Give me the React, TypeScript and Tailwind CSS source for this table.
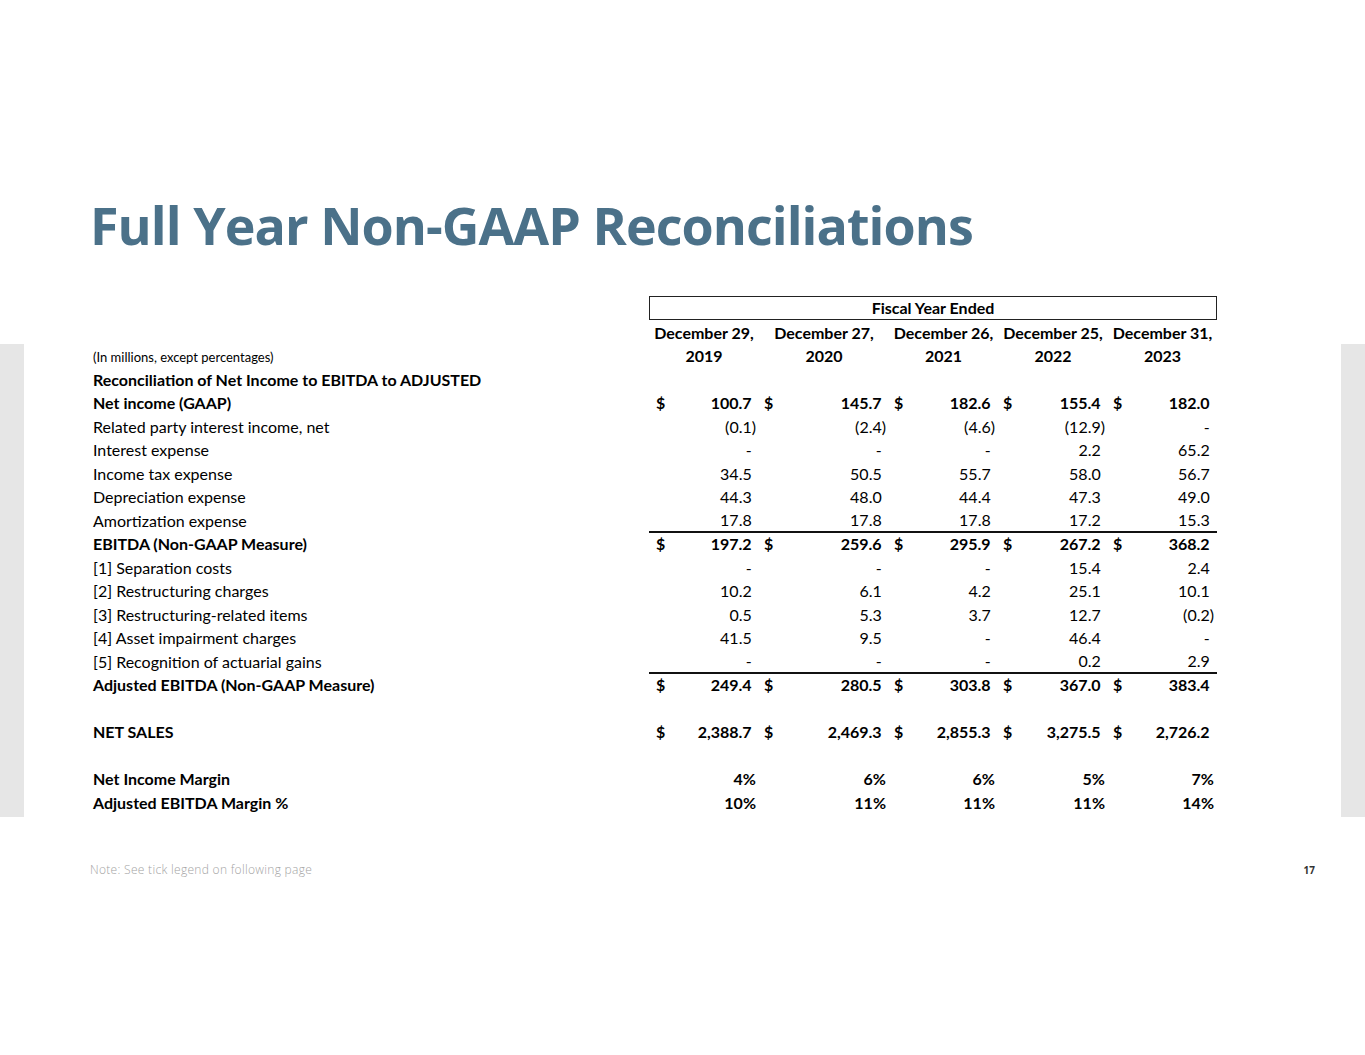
import React from 'react';

type Row = {
  label: string;
  bold?: boolean;
  values?: string[];
  dollar?: boolean;
  lineBelow?: boolean;
};

const ROWS: Row[] = [
  { label: 'Reconciliation of Net Income to EBITDA to ADJUSTED', bold: true },
  { label: 'Net income (GAAP)', bold: true, dollar: true, values: ['100.7', '145.7', '182.6', '155.4', '182.0'] },
  { label: 'Related party interest income, net', values: ['(0.1)', '(2.4)', '(4.6)', '(12.9)', '-'] },
  { label: 'Interest expense', values: ['-', '-', '-', '2.2', '65.2'] },
  { label: 'Income tax expense', values: ['34.5', '50.5', '55.7', '58.0', '56.7'] },
  { label: 'Depreciation expense', values: ['44.3', '48.0', '44.4', '47.3', '49.0'] },
  { label: 'Amortization expense', values: ['17.8', '17.8', '17.8', '17.2', '15.3'], lineBelow: true },
  { label: 'EBITDA (Non-GAAP Measure)', bold: true, dollar: true, values: ['197.2', '259.6', '295.9', '267.2', '368.2'] },
  { label: '[1] Separation costs', values: ['-', '-', '-', '15.4', '2.4'] },
  { label: '[2] Restructuring charges', values: ['10.2', '6.1', '4.2', '25.1', '10.1'] },
  { label: '[3] Restructuring-related items', values: ['0.5', '5.3', '3.7', '12.7', '(0.2)'] },
  { label: '[4] Asset impairment charges', values: ['41.5', '9.5', '-', '46.4', '-'] },
  { label: '[5] Recognition of actuarial gains', values: ['-', '-', '-', '0.2', '2.9'], lineBelow: true },
  { label: 'Adjusted EBITDA (Non-GAAP Measure)', bold: true, dollar: true, values: ['249.4', '280.5', '303.8', '367.0', '383.4'] },
  { label: '' },
  { label: 'NET SALES', bold: true, dollar: true, values: ['2,388.7', '2,469.3', '2,855.3', '3,275.5', '2,726.2'] },
  { label: '' },
  { label: 'Net Income Margin', bold: true, values: ['4%', '6%', '6%', '5%', '7%'] },
  { label: 'Adjusted EBITDA Margin %', bold: true, values: ['10%', '11%', '11%', '11%', '14%'] },
];

const DATES = [
  ['December 29,', '2019'],
  ['December 27,', '2020'],
  ['December 26,', '2021'],
  ['December 25,', '2022'],
  ['December 31,', '2023'],
];

const GRID = 'grid grid-cols-[556px_110px_130px_109px_110px_109px]';

function Value({ v }: { v: string }) {
  const pad = !v.startsWith('(') && !v.endsWith('%');
  return (
    <span>
      {v}
      {pad && <span className="invisible">)</span>}
    </span>
  );
}

export default function App() {
  return (
    <div className="w-[1365px] h-[1055px] bg-white overflow-hidden font-['Lato',sans-serif] text-black">
      <h1 className="pl-[90px] pt-[199px] text-[52px] leading-none font-bold tracking-[-0.95px] text-[#4b7189] font-['Open_Sans',sans-serif]">
        Full Year Non-GAAP Reconciliations
      </h1>

      <div className="flex mt-[45px]">
        <div className="w-[24px] h-[473px] mt-[48px] bg-[#e6e6e6] shrink-0" />

        <div className="ml-[69px] text-[16px]">
          <div className={GRID}>
            <div />
            <div className="col-span-5 h-[24px] border border-[#222] flex items-center justify-center font-bold">
              Fiscal Year Ended
            </div>
          </div>

          <div className={`${GRID} pt-[1px]`}>
            <div className="h-[23.5px]" />
            {DATES.map(([d]) => (
              <div key={d} className="h-[23.5px] flex items-center justify-center font-bold whitespace-nowrap">{d}</div>
            ))}
            <div className="h-[23.5px] flex items-center pt-[3px] text-[13px]">(In millions, except percentages)</div>
            {DATES.map(([d, y]) => (
              <div key={d + y} className="h-[23.5px] flex items-center justify-center font-bold">{y}</div>
            ))}
          </div>

          {ROWS.map((r, i) => (
            <div key={i} className={GRID}>
              <div className={`h-[23.5px] flex items-center whitespace-nowrap ${r.bold ? 'font-bold' : ''}`}>{r.label}</div>
              {[0, 1, 2, 3, 4].map(c => (
                <div
                  key={c}
                  className={`h-[23.5px] flex items-center justify-between pr-[3px] ${c === 0 ? 'pl-[7px]' : 'pl-[5px]'} ${r.bold ? 'font-bold' : ''} ${r.lineBelow ? 'border-b-2 border-[#111]' : ''}`}
                >
                  <span>{r.dollar ? '$' : ''}</span>
                  {r.values ? <Value v={r.values[c]} /> : <span />}
                </div>
              ))}
            </div>
          ))}
        </div>

        <div className="ml-auto w-[24px] h-[473px] mt-[48px] bg-[#e6e6e6] shrink-0" />
      </div>

      <div className="flex items-center justify-between pl-[90px] pr-[50px] mt-[46px] h-[14px]">
        <span className="text-[12px] tracking-[0.3px] text-[#a3a3a3] font-['Open_Sans',sans-serif] font-light">
          Note: See tick legend on following page
        </span>
        <span className="text-[10px] text-[#333] font-bold font-['Open_Sans',sans-serif]">17</span>
      </div>
    </div>
  );
}
